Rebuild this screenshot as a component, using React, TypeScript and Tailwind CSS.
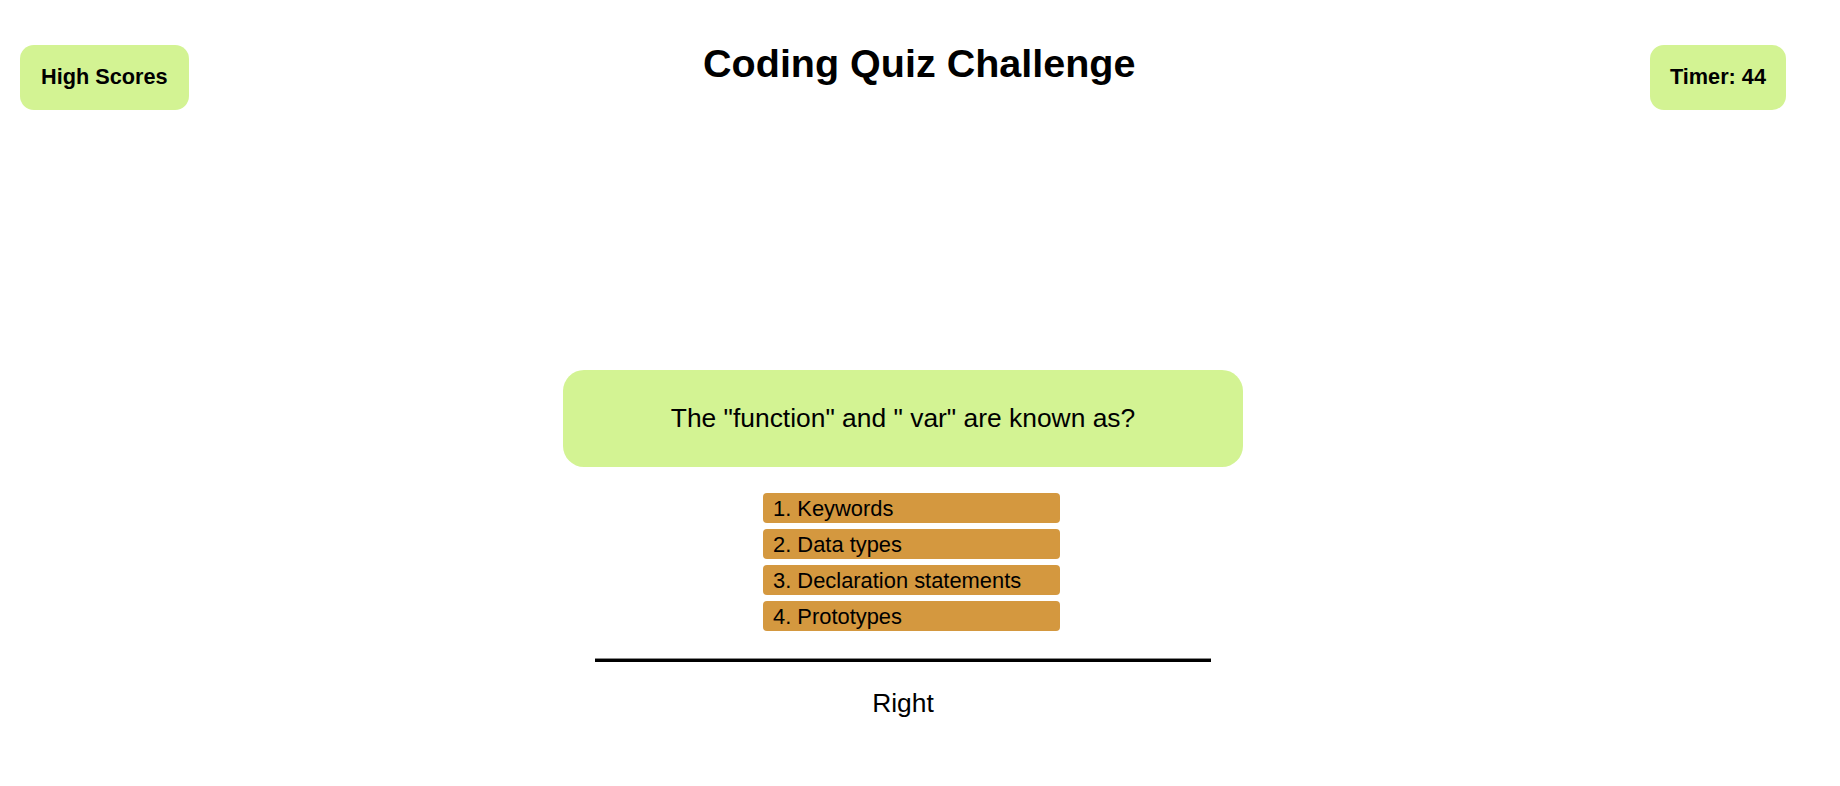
import React from "react";

const answers = [
  "1. Keywords",
  "2. Data types",
  "3. Declaration statements",
  "4. Prototypes",
];

export default function App() {
  return (
    <div
      className="min-h-screen bg-white text-black pr-[34px]"
      style={{ fontFamily: '"Liberation Sans", Arial, sans-serif' }}
    >
      <header className="flex items-start justify-between px-[20px] pt-[41px]">
        <button className="mt-[4px] h-[65px] px-[21px] flex items-center rounded-[14px] bg-[#d3f393] text-[21.7px] font-bold text-black">
          High Scores
        </button>
        <h1 className="text-[39.5px] leading-[45px] font-bold text-black">
          Coding Quiz Challenge
        </h1>
        <div className="mt-[4px] h-[65px] px-[20px] flex items-center rounded-[14px] bg-[#d3f393] text-[21.7px] font-bold text-black">
          Timer: 44
        </div>
      </header>

      <main className="mt-[260px] flex flex-col items-center">
        <div className="w-[680px] h-[97px] rounded-[21px] bg-[#d3f393] flex items-center justify-center text-[26.4px] text-black">
          The "function" and " var" are known as?
        </div>

        <div className="mt-[26px] pl-[17px]">
          <ul className="flex flex-col gap-[6px]">
            {answers.map((a) => (
              <li key={a}>
                <button className="w-[297px] h-[30px] rounded-[4px] bg-[#d4983f] flex items-center pl-[10px] pt-[2px] text-[21.9px] text-black text-left">
                  {a}
                </button>
              </li>
            ))}
          </ul>
        </div>

        <div className="mt-[27px] w-[616px] h-[4px] bg-black border-t border-[#8a8a8a]" />

        <p className="mt-[26px] text-[26.4px] leading-[31px] text-black">Right</p>
      </main>
    </div>
  );
}
